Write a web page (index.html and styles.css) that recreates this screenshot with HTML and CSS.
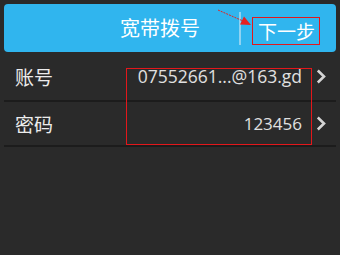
FILE: index.html
```html
<!DOCTYPE html>
<html>
<head>
<meta charset="utf-8">
<link rel="stylesheet" href="styles.css">
</head>
<body>
<div class="screen">
  <div class="header">
    <div class="title">宽带拨号</div>
    <div class="divider"></div>
    <div class="next">下一步</div>
  </div>
  <div class="list">
    <div class="row row1">
      <div class="label">账号</div>
      <div class="value">07552661...@163.gd</div>
      <svg class="chev" viewBox="0 0 10 15" width="10" height="15"><path d="M1.8 1.5 L8 7.5 L1.8 13.5" fill="none" stroke="#d4d4d4" stroke-width="2.6"/></svg>
    </div>
    <div class="row row2">
      <div class="label">密码</div>
      <div class="value">123456</div>
      <svg class="chev" viewBox="0 0 10 15" width="10" height="15"><path d="M1.8 1.5 L8 7.5 L1.8 13.5" fill="none" stroke="#d4d4d4" stroke-width="2.6"/></svg>
    </div>
  </div>
  <svg class="arrow" viewBox="0 0 340 60" width="340" height="60">
    <line x1="218" y1="10" x2="243" y2="21" stroke="#e8211f" stroke-width="1" stroke-dasharray="2 1"/>
    <polygon points="251,25 240,24.5 244,16.5" fill="#e8211f"/>
  </svg>
  <div class="mark mark-next"></div>
  <div class="mark mark-values"></div>
</div>
</body>
</html>
```

FILE: styles.css
```css
html, body {
  margin: 0;
  padding: 0;
  background: #2a2a2a;
}
.screen {
  position: relative;
  width: 340px;
  height: 255px;
  padding: 4px 4px 0 4px;
  box-sizing: border-box;
  background: #2a2a2a;
  font-family: "Noto Sans CJK SC", "Open Sans", sans-serif;
}
.header {
  height: 48px;
  background: #30b5ee;
  border-radius: 4px;
  display: flex;
  align-items: center;
  color: #ffffff;
}
.title {
  margin-left: 116px;
  width: 80px;
  font-size: 20px;
  line-height: 24px;
  white-space: nowrap;
}
.divider {
  margin-left: 39px;
  width: 2px;
  height: 33px;
  background: #8fd3f2;
}
.next {
  margin-left: 17px;
  font-size: 19px;
  line-height: 24px;
  margin-top: 6px;
  white-space: nowrap;
}
.row {
  display: flex;
  align-items: center;
  border-bottom: 2px solid #1c1c1c;
  padding-left: 11px;
  padding-right: 10px;
}
.row1 {
  height: 48px;
}
.row2 {
  height: 43px;
}
.label {
  font-size: 19px;
  color: #ececec;
  flex: 1;
}
.value {
  font-family: "Open Sans", sans-serif;
  font-size: 17.5px;
  color: #e0e0e0;
  margin-right: 14px;
}
.row2 .value {
  font-size: 17px;
}
.chev {
  display: block;
}
.arrow {
  position: absolute;
  left: 0;
  top: 0;
}
.mark {
  position: absolute;
  border: 1.5px solid #e3171b;
  box-sizing: border-box;
}
.mark-next {
  left: 252px;
  top: 17px;
  width: 68px;
  height: 28px;
}
.mark-values {
  left: 126px;
  top: 68px;
  width: 186px;
  height: 77px;
}
```
